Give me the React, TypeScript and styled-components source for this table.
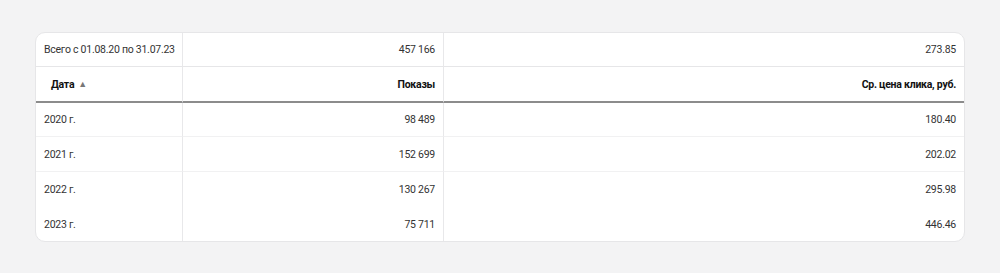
import styled, { createGlobalStyle } from 'styled-components';

const Global = createGlobalStyle`
  html, body {
    margin: 0;
    padding: 0;
    background: #f3f3f4;
  }
  body {
    font-family: Roboto, "Liberation Sans", sans-serif;
  }
`;

const Page = styled.div`
  width: 1000px;
  height: 273px;
  padding: 32px 35px 0 35px;
  box-sizing: border-box;
`;

const Card = styled.div`
  background: #fff;
  border: 1px solid #e6e6e8;
  border-radius: 10px;
  overflow: hidden;
`;

const Table = styled.div`
  display: grid;
  grid-template-columns: 147px 261px 1fr;
`;

type Line = 'none' | 'light' | 'head' | 'row';

const Cell = styled.div<{ $align?: 'left' | 'right'; $head?: boolean; $line?: Line; $h?: number }>`
  box-sizing: border-box;
  height: ${p => p.$h ?? 34}px;
  display: flex;
  align-items: center;
  justify-content: ${p => (p.$align === 'right' ? 'flex-end' : 'flex-start')};
  padding: 0 8px;
  white-space: nowrap;
  font-size: 10.5px;
  letter-spacing: -0.25px;
  color: ${p => (p.$head ? '#111' : '#333')};
  font-weight: ${p => (p.$head ? 700 : 400)};
  border-right: 1px solid #e8e8ea;
  border-bottom: ${p =>
    p.$line === 'head'
      ? '2px solid #8c8c8c'
      : p.$line === 'light'
      ? '1px solid #e6e6e8'
      : p.$line === 'row'
      ? '1px solid #f1f1f2'
      : '0'};
  &:nth-child(3n) {
    border-right: none;
  }
`;

const HeadLabel = styled.span`
  padding-left: 7px;
  display: inline-flex;
  align-items: center;
  gap: 4px;
`;

const Arrow = styled.span`
  color: #777;
  font-size: 9px;
  font-weight: 400;
`;

const rows = [
  { year: '2020 г.', shows: '98 489', price: '180.40', h: 34 },
  { year: '2021 г.', shows: '152 699', price: '202.02', h: 35 },
  { year: '2022 г.', shows: '130 267', price: '295.98', h: 35 },
  { year: '2023 г.', shows: '75 711', price: '446.46', h: 34 },
];

export default function App() {
  return (
    <Page>
      <Global />
      <Card>
        <Table>
          <Cell $line="light">Всего с 01.08.20 по 31.07.23</Cell>
          <Cell $line="light" $align="right">457 166</Cell>
          <Cell $line="light" $align="right">273.85</Cell>

          <Cell $line="head" $h={36} $head>
            <HeadLabel>
              Дата <Arrow>▲</Arrow>
            </HeadLabel>
          </Cell>
          <Cell $line="head" $h={36} $head $align="right">Показы</Cell>
          <Cell $line="head" $h={36} $head $align="right">Ср. цена клика, руб.</Cell>

          {rows.map((r, i) => {
            const line: Line = i < 2 ? 'row' : 'none';
            return [
              <Cell key={r.year + 'a'} $h={r.h} $line={line}>{r.year}</Cell>,
              <Cell key={r.year + 'b'} $h={r.h} $line={line} $align="right">{r.shows}</Cell>,
              <Cell key={r.year + 'c'} $h={r.h} $line={line} $align="right">{r.price}</Cell>,
            ];
          })}
        </Table>
      </Card>
    </Page>
  );
}
